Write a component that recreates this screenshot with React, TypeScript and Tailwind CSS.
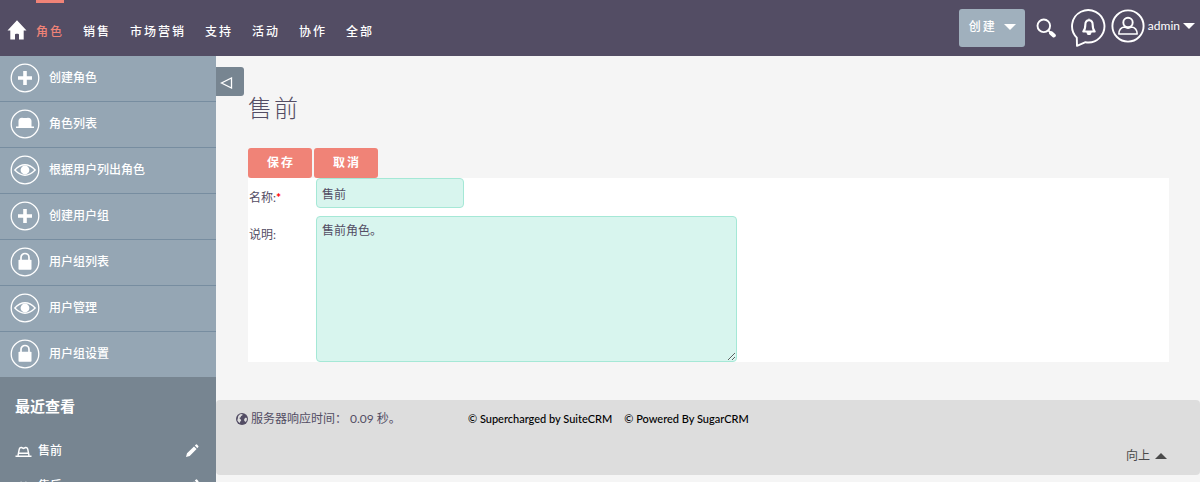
import type { ReactNode } from "react";

const navItems = ["销售", "市场营销", "支持", "活动", "协作", "全部"];

type Glyph = "plus" | "hat" | "eye" | "lock";

const actions: { label: string; glyph: Glyph }[] = [
  { label: "创建角色", glyph: "plus" },
  { label: "角色列表", glyph: "hat" },
  { label: "根据用户列出角色", glyph: "eye" },
  { label: "创建用户组", glyph: "plus" },
  { label: "用户组列表", glyph: "lock" },
  { label: "用户管理", glyph: "eye" },
  { label: "用户组设置", glyph: "lock" },
];

const recent = ["售前", "售后"];

const glyphs: Record<Glyph, ReactNode> = {
  plus: <path d="M13.2 8h3.6v5.2H22v3.6h-5.200V22h-3.600v-5.200H8v-3.600h5.200z" fill="#fff" />,
  hat: (
    <path
      d="M8.500 17.500V12q0-3 3.500-3.200Q15 9.200 18 8.800Q21.500 9 21.500 12v5.500h2.500v1.500h-18v-1.500z"
      fill="#fff"
    />
  ),
  eye: (
    <>
      <path
        d="M4.800 15Q15 4.500 25.200 15Q15 25.500 4.800 15z"
        fill="none"
        stroke="#fff"
        strokeWidth="1.300"
      />
      <circle cx="15" cy="15" r="4.400" fill="#fff" />
    </>
  ),
  lock: (
    <>
      <path
        d="M11 14v-3.500a4 4 0 0 1 8 0v3.500"
        fill="none"
        stroke="#fff"
        strokeWidth="1.700"
      />
      <rect x="8.500" y="12.700" width="13" height="10" rx="0.800" fill="#fff" />
    </>
  ),
};

function ActionIcon({ glyph }: { glyph: Glyph }) {
  return (
    <svg viewBox="0 0 30 30" className="size-[30px] shrink-0" aria-hidden="true">
      <circle cx="15" cy="15" r="13.800" fill="none" stroke="#fff" strokeWidth="1.300" />
      {glyphs[glyph]}
    </svg>
  );
}

function Caret({ up = false }: { up?: boolean }) {
  return (
    <svg viewBox="0 0 12 6" className="h-[6px] w-[12px]" aria-hidden="true">
      <path d={up ? "M0 6L6 0L12 6z" : "M0 0h12L6 6z"} fill="currentColor" />
    </svg>
  );
}

function Header() {
  return (
    <header className="flex h-[56px] shrink-0 items-start justify-between bg-[#534d64] text-white">
      <nav className="flex items-start pl-[7px]">
        <a href="#home" aria-label="主页" className="mt-[20px] mr-[9px]">
          <svg viewBox="0 0 20 20" className="size-[20px]" aria-hidden="true">
            <path
              d="M10 0.300L19.500 10.600H16.700V19.500H12V14.800Q12 13.700 10.900 13.700H9.100Q8 13.700 8 14.800V19.500H3.300V10.600H0.500z"
              fill="#fff"
            />
          </svg>
        </a>
        <div className="flex gap-[19px] text-[12px] leading-[20px] font-medium tracking-[2px] whitespace-nowrap">
          <a href="#roles" className="border-t-3 border-[#f08377] pt-[19px] text-[#f08377]">
            角色
          </a>
          {navItems.map((item) => (
            <a key={item} href="#menu" className="pt-[22px]">
              {item}
            </a>
          ))}
        </div>
      </nav>
      <div className="flex items-start pr-[5px]">
        <button
          type="button"
          className="mt-[9px] flex h-[38px] w-[66px] items-center justify-between rounded-[3px] bg-[#a0b0bd] pr-[9px] pb-[2px] pl-[10px] text-[12px] font-medium tracking-[2px]"
        >
          创建
          <Caret />
        </button>
        <button type="button" aria-label="搜索" className="mt-[18px] ml-[11px]">
          <svg viewBox="0 0 20 20" className="size-[20px]" aria-hidden="true">
            <circle cx="7.800" cy="7.800" r="6.300" fill="none" stroke="#fff" strokeWidth="1.900" />
            <path d="M12.300 12.300l2 2" stroke="#fff" strokeWidth="1.800" />
            <path d="M15 15l2.800 2.500" stroke="#fff" strokeWidth="4" strokeLinecap="round" />
          </svg>
        </button>
        <button type="button" aria-label="通知" className="mt-[8px] ml-[15px]">
          <svg viewBox="0 0 36 40" className="h-[40px] w-[36px]" aria-hidden="true">
            <path
              d="M5.800 29.700A16.200 16.200 0 1 1 14.500 34.200L6 37.800z"
              fill="none"
              stroke="#fff"
              strokeWidth="1.900"
              strokeLinejoin="round"
            />
            <path
              d="M12.300 23.500Q14.300 21.500 14.300 17Q14.300 12.300 18 12.300Q21.700 12.300 21.700 17Q21.700 21.500 23.700 23.500z"
              fill="none"
              stroke="#fff"
              strokeWidth="2.100"
              strokeLinejoin="round"
            />
            <path d="M18 10.500v2M15.800 24.300h4.400L19.300 26.500h-2.600z" fill="#fff" stroke="#fff" />
          </svg>
        </button>
        <button
          type="button"
          className="mt-[9px] ml-[4px] flex items-center gap-[3px] text-[12px] leading-[20px]"
        >
          <svg viewBox="0 0 34 34" className="size-[34px]" aria-hidden="true">
            <g fill="none" stroke="#fff">
              <circle cx="17" cy="17" r="15.600" strokeWidth="1.900" />
              <circle cx="17" cy="13.500" r="4.700" strokeWidth="1.900" />
              <path
                d="M7.800 25Q8 18.700 13.500 18Q17 20.500 20.500 18Q26 18.700 26.200 25z"
                strokeWidth="1.500"
                strokeLinejoin="round"
              />
            </g>
          </svg>
          <span>admin</span>
          <Caret />
        </button>
      </div>
    </header>
  );
}

function Sidebar() {
  return (
    <aside className="w-[216px] shrink-0 overflow-hidden bg-[#778591] text-[12px] font-medium text-white">
      <ul className="bg-[#95a6b4]">
        {actions.map(({ label, glyph }) => (
          <li
            key={label}
            className="border-b border-[#778da0] last:border-b-0"
          >
            <a href="#action" className="flex h-[45px] items-center gap-[9px] pb-[1px] pl-[10px]">
              <ActionIcon glyph={glyph} />
              <span className="pb-[1px]">{label}</span>
            </a>
          </li>
        ))}
      </ul>
      <h2 className="px-[15px] pt-[19px] pb-[17px] text-[15px] leading-[20px] font-bold">
        最近查看
      </h2>
      <ul>
        {recent.map((name) => (
          <li
            key={name}
            className="flex h-[35px] items-center justify-between pr-[17px] pl-[15px]"
          >
            <a href="#record" className="flex items-center gap-[6px]">
              <svg viewBox="0 0 17 12" className="mt-[2px] h-[12px] w-[17px]" aria-hidden="true">
                <path
                  d="M3 9.500L4.300 3Q4.800 1.200 6.500 1.500L8.500 2.500L10.500 1.500Q12.200 1.200 12.700 3L14 9.500M4 7.300h9M0.500 10.300h16"
                  fill="none"
                  stroke="#fff"
                  strokeWidth="1.400"
                />
              </svg>
              <span>{name}</span>
            </a>
            <button type="button" aria-label={`编辑${name}`}>
              <svg viewBox="0 0 14 14" className="size-[14px]" aria-hidden="true">
                <path
                  d="M1 13L2 9.300L9 2.400L11.600 5L4.700 12zM9.800 1.600L11 0.500Q11.500 0.200 12 0.600L13.300 2Q13.800 2.500 13.300 3.100L12.300 4.200z"
                  fill="#fff"
                />
              </svg>
            </button>
          </li>
        ))}
      </ul>
    </aside>
  );
}

function RoleForm() {
  return (
    <form className="text-[12px]" onSubmit={(event) => event.preventDefault()}>
      <div className="flex gap-[2px] font-bold tracking-[2px] text-white">
        <button
          type="submit"
          className="h-[30px] w-[64px] rounded-[3px] bg-[#f08377] pl-[2px]"
        >
          保存
        </button>
        <button
          type="button"
          className="h-[30px] w-[64px] rounded-[3px] bg-[#f08377] pl-[2px]"
        >
          取消
        </button>
      </div>
      <div className="grid grid-cols-[68px_minmax(0,1fr)] gap-y-[8px] bg-white">
        <label htmlFor="role-name" className="pt-[10px] pl-[1px] leading-[20px]">
          名称:<span className="font-bold text-[#ff0000]">*</span>
        </label>
        <input
          id="role-name"
          type="text"
          defaultValue="售前"
          className="h-[30px] w-[148px] rounded-[4px] border border-[#a5e8d6] bg-[#d8f5ee] px-[5px] outline-none"
        />
        <label htmlFor="role-description" className="pt-[9px] pl-[1px] leading-[20px]">
          说明:
        </label>
        <textarea
          id="role-description"
          defaultValue="售前角色。"
          className="block h-[146px] w-[421px] max-w-full rounded-[4px] border border-[#a5e8d6] bg-[#d8f5ee] px-[5px] py-[4px] leading-[20px] outline-none"
        />
      </div>
    </form>
  );
}

function Footer() {
  return (
    <footer className="rounded-[4px] bg-[#dddddd] pt-[9px] pr-[33px] pb-[9px] pl-[20px] text-[12px] leading-[20px]">
      <div className="flex">
        <div className="flex w-[232px] items-center gap-[3px]">
          <svg viewBox="0 0 12 12" className="size-[12px]" aria-hidden="true">
            <circle cx="6" cy="6" r="6" fill="#534d64" />
            <path
              d="M2.200 3.200Q3.200 1.600 5 1.100L6.800 1.500L6.200 2.600L5 3L4.700 4.200L3.200 5L4.600 6.200L5.200 7.500L4.300 8.500L3.800 10Q2 9 1.300 7.200L1.800 5.500zM8.600 5.600L9.900 4.600L11 5.500Q11 7.500 9.700 9L8.700 8.300L8 7z"
              fill="#dddddd"
            />
          </svg>
          <span className="whitespace-pre">服务器响应时间： 0.09 秒。</span>
        </div>
        <div className="flex gap-[12px] text-[11px] font-medium text-black">
          <a href="#suitecrm">© Supercharged by SuiteCRM</a>
          <a href="#sugarcrm">© Powered By SugarCRM</a>
        </div>
      </div>
      <div className="mt-[17px] flex justify-end text-[#4a4a4a]">
        <a href="#top" className="flex items-center gap-[5px]">
          向上
          <Caret up />
        </a>
      </div>
    </footer>
  );
}

export default function App() {
  return (
    <div
      lang="zh-CN"
      className="flex h-screen flex-col overflow-hidden bg-[#f5f5f5] font-[Lato,'Noto_Sans_CJK_SC',sans-serif] text-[#534d64]"
    >
      <Header />
      <div className="flex min-h-0 flex-1">
        <Sidebar />
        <main className="min-w-0 flex-1 pt-[11px]">
          <button
            type="button"
            aria-label="收起侧栏"
            className="flex h-[29px] w-[28px] items-center rounded-r-[3px] bg-[#778591] pl-[4px]"
          >
            <svg viewBox="0 0 13 12" className="mt-[2px] h-[12px] w-[13px]" aria-hidden="true">
              <path d="M11.500 1v10L1.500 6z" fill="none" stroke="#fff" strokeWidth="1.300" />
            </svg>
          </button>
          <div className="pr-[31px] pb-[38px] pl-[32px]">
            <h1 className="pb-[28px] text-[24px] leading-[24px] font-light tracking-[2px]">
              售前
            </h1>
            <RoleForm />
          </div>
          <Footer />
        </main>
      </div>
    </div>
  );
}
